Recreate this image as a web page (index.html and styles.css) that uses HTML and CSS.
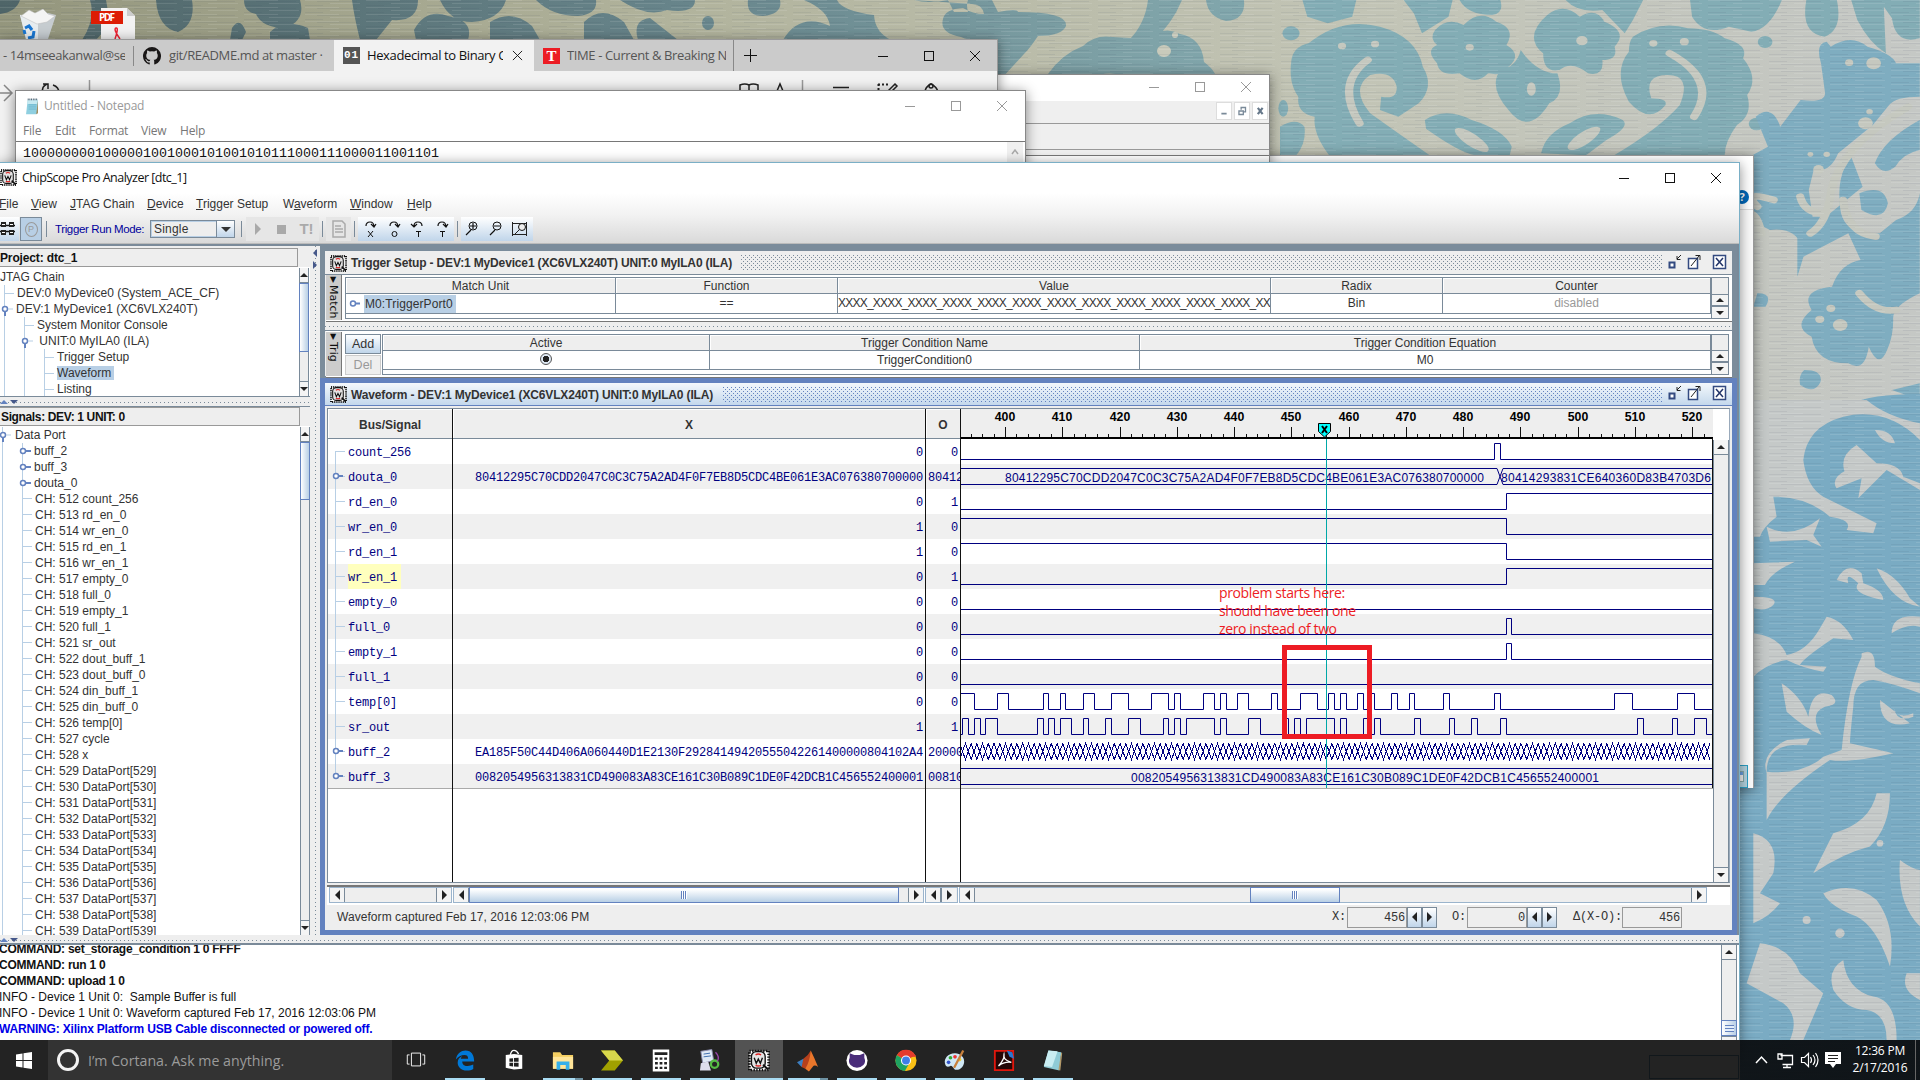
FILE: index.html
```html
<!DOCTYPE html>
<html lang="en">
<head>
<meta charset="utf-8">
<title>ChipScope Pro Analyzer [dtc_1]</title>
<link rel="stylesheet" href="styles.css">
</head>
<body>
<svg width="0" height="0" class="defs">
  <defs>
    <symbol id="chip" viewBox="0 0 16 16">
      <rect x="1" y="1" width="14" height="14" fill="#fff" stroke="#111" stroke-width="2" stroke-dasharray="1 1"/>
      <rect x="2.5" y="1.500" width="10" height="12" rx="3.500" fill="#e4e4e4" stroke="#111"/>
      <path d="M5.500 4q2-1.500 4 0M5.500 11.500q2 1 4 0" stroke="#d22" fill="none" stroke-width="1"/>
      <path d="M4.500 6l1.500 4 1.500-3 1.500 3 1.500-4" stroke="#111" fill="none" stroke-width="1"/>
      <path d="M11 11l3.500 3.500" stroke="#111" stroke-width="1.500"/>
    </symbol>
    <symbol id="win-min" viewBox="0 0 12 12"><path d="M1 6.500h10" stroke="currentColor" fill="none"/></symbol>
    <symbol id="win-max" viewBox="0 0 12 12"><rect x="1.500" y="1.500" width="9" height="9" stroke="currentColor" fill="none"/></symbol>
    <symbol id="win-x" viewBox="0 0 12 12"><path d="M1 1l10 10M11 1L1 11" stroke="currentColor" fill="none"/></symbol>
    <symbol id="pad" viewBox="0 0 16 20">
      <path d="M3 2h12v15l-2 2H1z" fill="#8fcfe0"/><path d="M3 2h12l-1 5H2.500z" fill="#c5e9f1"/><path d="M15 3v15l-2 1z" fill="#a48a5a"/>
      <path d="M3 1.500h12" stroke="#456" stroke-width="2" stroke-dasharray="1 1"/><path d="M4 8h9M4 10.500h9M4 13h9" stroke="#5aa9c4" stroke-width=".700"/>
    </symbol>
    <symbol id="in-max" viewBox="0 0 62 16">
      <path d="M3.500 8.500h5v5h-5z" fill="#fff" stroke="#334a80" stroke-width="2"/><path d="M15 1l-4 4M11 2v3.500h3.500" stroke="#222" fill="none"/>
      <path d="M22.500 4.500h9v10h-9z" fill="#fff" stroke="#334a80" stroke-width="1.500"/><path d="M25 12l8-10M29.500 1.500H34V6" stroke="#222" fill="none"/>
      <path d="M47.500 1.500h12v13h-12z" fill="#fff" stroke="#334a80" stroke-width="1.500"/><path d="M50 4l7 8M57 4l-7 8" stroke="#223468" stroke-width="1.500"/>
    </symbol>
  </defs>
</svg>

<main class="desktop">
  <svg class="wallpaper" viewBox="0 0 1920 1080">
    <defs>
      <linearGradient id="cloth" x1="0" x2="1"><stop offset="0" stop-color="#94967d"/><stop offset=".35" stop-color="#b1b39c"/><stop offset=".7" stop-color="#c2c4b5"/><stop offset="1" stop-color="#c5c8c5"/></linearGradient>
      <linearGradient id="dye" gradientUnits="userSpaceOnUse" x1="0" x2="1920" y1="0" y2="0"><stop offset="0" stop-color="#4f6568"/><stop offset=".35" stop-color="#67848a"/><stop offset=".6" stop-color="#7fa3a8"/><stop offset=".8" stop-color="#86b0b8"/><stop offset="1" stop-color="#77abc6"/></linearGradient>
      <pattern id="weave" width="61" height="7" patternUnits="userSpaceOnUse"><path d="M0 .5h34M25 3.500h30" stroke="#fff" stroke-opacity=".1"/><path d="M12 1.500h40M0 5.500h18" stroke="#345" stroke-opacity=".08"/></pattern>
    </defs>
    <rect width="1920" height="1080" fill="url(#cloth)"/>
    <g fill="url(#dye)">
      <path d="M0 0h20q-4 12-20 14zM90 0h16q6 26-10 40H82q14-22 8-40zM156 0h36q4 24-14 32-20-4-22-32zM232 28q8-12 14 4l-4 8h-12zM244 0h56q6 20-14 28-24 0-30-14-12-2-12-14zM270 32q14-14 38-4l2 12h-40zM352 0h66q0 22-26 20l-16 20h-16q-6-24-8-40zM414 30q12-22 34-14 26 4 20 24h-52zM440 0h66q-6 20-34 22-22 0-32-22zM490 22q22-14 42 4l8 14h-50zM536 0h60q2 14-18 16-26 0-42-16zM584 22q18-18 40 0l10 18h-50z"/>
      <path d="M620 0h75q0 14-28 10-20 8-47-10zM650 18l28 22h-40q-6-20 12-22zM748 0q-2 16 15 16 20-2 17-16zM804 0q24 10 26 26-30-14-47 14h108q-16-8-17-25-32-4-37-15zM702 23a6 7 0 1 1 12 0 6 7 0 0 1-12 0zM914 0q14 4 34 0l6 12h14q-2-8 0-12h24l6 12q20-4 20 0 50 0 48 14-4 10-28 10-8 12-14 18l-22 24h-8V40q-24 2-33-3-22-4-18-18 2-10 20-11 10 6 21 6-2-10-12-10z"/>
      <path d="M1148 0h34q-10 24-28 40h-25q16-16 19-40zM1206 0h38q2 20-18 21-18-4-20-21zM1048 74q14-20 35-28 12-12 30-9l35 2q16-14 32-5 22 4 24 28 16 12 10 20h-80q-18-12-34-7-24 12-52-1z"/>
    </g>
    <g fill="#c8cabb"><ellipse cx="1164" cy="51" rx="7" ry="6"/><circle cx="1175" cy="35" r="3"/></g>
    <g transform="translate(1280) scale(.408 .3333)">
      <g fill="#83adb5">
      <path d="M55 0h132l-10 50-60 20-50-20zM303 0h120l-10 50-65 50-20-60zM440 0h100q10 40-20 45-60 0-80-45zM700 0h190l-25 60-20 40-55-70q-60 10-90-30zM1005 0h225q-30 90-75 95l-55-15q-60 30-90-30zM1290 0h75q15 90-30 110-60-10-45-110zM1400 0h168v115q-60 20-68-60l-20-35 5 140q-40-30-70-100z"/>
      <circle cx="27" cy="100" r="21"/><ellipse cx="8" cy="325" rx="12" ry="25"/><circle cx="1189" cy="126" r="18"/><circle cx="1168" cy="372" r="19"/>
      <path d="M70 130Q150 50 245 80q90 30 105 120 30 60-10 110l-50 40-45-20 3-40q40 10 38-30-10-50-65-35-50 40 0 115 80 70 145 125H120Q80 400 85 350 40 340 45 290 20 250 28 180q5-40 42-50z"/>
      <path d="M380 90q30-40 70-15 40-50 80-10 50 20 25 70 40 30 5 65-10 30-50 20-30 40-70 0-50 10-55-30-30-40 0-55-20-20-5-45z"/>
      <path d="M655 45q40-40 80 5 40-30 60 15 60 30 25 75 10 40-30 40 5 50-35 40-40-40-70-10-40 10-40-50-50-50 10-115z"/>
      <path d="M590 150q40 70 90 70 20 70-20 90-50 100-100 20-50-70-20-120 40-10 50-60z"/>
      <path d="M865 110Q930 60 1000 85q60 0 90 30 60 20 45 60 40 60 10 110 15 60-25 90-30 50-30 90H820q110-80 160-150 30-90-30-90-60 0-40 70 40 0 35 20-40 60-90-10-40-90 0-150 0-30 10-45z"/>
      <path d="M355 360q50-40 115 0 80 30 98 80l-5 26h-85q-40-10-120-80zM640 460q10-60 70-90 60-50 130-10 20 20-40 60l-50 46zM0 380q40-30 60 0 5 50-20 86H0z"/>
      </g>
      <g fill="#7fadc0">
      <path d="M1350 140q50-40 90 0 60 20 70 50l58 0v100q-60 0-75 25l-40 60-85 85q-20 60-60 50l-12 60 15 130-30 40q-20-60-80-50l-65-40V480l60-40-30-90q40-40 60 30l50-80q60 10 60-20l-10-90q-15-60 14-65z"/>
      <path d="M1568 360v90q-40 10-60 50-30 30-50-10 20-70 110-130zM1400 470q-40 60-25 170 15 70 95 60l40-40q50-20 58-80v300q-70 40-65 80 0 50-15 90-20 60-45-10-10 80-50 50-80 0-90-80-50-30 0-80-30-60 50-70 20-70 70-80l-30-80-110 70-15 60V650l70 0 90-90z"/>
      <path d="M1420 580q60-30 70 30-10 60-65 20zM1285 1110q45 0 40 35-15 40-50 10-5-30 10-45zM1170 880q40 0 20 40h-30zM1500 1170l68-20v50z"/>
      </g>
      <g fill="#c5c8bf"><circle cx="152" cy="138" r="10"/><circle cx="233" cy="132" r="10"/><circle cx="465" cy="142" r="10"/><circle cx="740" cy="122" r="14"/><ellipse cx="616" cy="267" rx="11" ry="20"/><ellipse cx="470" cy="420" rx="52" ry="18" transform="rotate(40 470 420)"/><ellipse cx="745" cy="415" rx="50" ry="18" transform="rotate(-40 745 415)"/><circle cx="915" cy="130" r="10"/><circle cx="991" cy="125" r="11"/><circle cx="1455" cy="190" r="18"/><circle cx="1395" cy="188" r="10"/><circle cx="1435" cy="370" r="18"/><circle cx="1445" cy="335" r="8"/><circle cx="1320" cy="508" r="13"/><circle cx="1300" cy="463" r="7"/><circle cx="1340" cy="463" r="8"/><circle cx="1373" cy="975" r="18"/><circle cx="1350" cy="925" r="11"/><circle cx="1323" cy="958" r="11"/></g>
      <g fill="none" stroke="#c5c8bf" stroke-width="20" stroke-linecap="round"><path d="M195 370q-60-120 20-190M1015 350q60-110-60-190M1540 320Q1370 440 1350 580q-10 90-50 120M1380 600q10 100 80 110M1180 700q-10-60-30-60M1210 600q-80-30-40 20M1420 880q40 60 90 50M1275 590q10 50 60 50"/></g>
    </g>
    <path d="M1740 400q60 20 110 4 20-10 70-10v686h-180z" fill="#7aabc3"/>
    <g transform="translate(1400 400) scale(.3333)" fill="#c5c9c8">
      <path d="M1060 0h340q60 50 160 70v50q-100-100-230-70-110 30-120 130 10 80 60 110l160 80-10 30-80-10q20-30-50-40-70-60-170-60l10 60q-40 30-50 60h-20z"/>
      <path d="M1100 380q80 40 160-25l-20 50 25 35-45-20-110 5zM1060 490l125-5q-70 30-90 70h-35zM1060 590q80 0 60 25-20 20-60 10zM1310 540q30-60 75-20l5 30q60 20 60 50-100-20-75-50-40-40-30 0zM1430 505q60 20 100 90l30 25q-80-10-130-115zM1280 650q50 10 80 70l-60-5q-90 60-100 80l80 5-10 15q-60-10-110-35-60 10-100 50V700q80 10 100 65 60-10 100-80z"/>
      <path d="M1385 760q40-20 40 40 40 30 135 50v30q-80-30-140-40-60 0-60 80-10 90-10 110 130 30 130 30-130 30-190 20-150 100-190 180V1120q-20-60 60-100l70-5-10 20q-120-10-120 80 110 10 170-45l55-20q20-200 60-280zM1145 850q60 40 80 100 10-90 70-65 30 30-20 35-50 20-10 85-50-20-105-70z"/>
      <path d="M1340 230q-30-60 30-95l60 55q70 0 80 40l50 20v20l-100-60-85 85 10-60-75 30q-20-30 30-55zM1425 90q50 0 60 40-40 0-60-40zM1475 700q0-60 85-50v30q-40-10-85 20zM1440 900q0 90 90 70M1480 920q10 40 60 20v10q-50 20-60-30z"/>
      <path d="M1430 1180q-20 90-130 120l-60 120q90-60 170-80 60-60 60-160zM1060 1300q80 20 60 120l-40 60 60 30q-30 40-80 60zM1270 1480q90-40 160 20 60 80 40 200-40-120-100-150-80-30-100-70zM1500 1380q40 30 60 30v170q-70-70-60-200zM1080 1630q90 10 120 90l70 60-60 140h-40q30-70-20-110l-110-60zM1330 1680q-50 30-30 90 40 60 100 60 60 10 60 90h30q0-120-70-130-80-20-90-110zM1520 1720q-20 50 40 80v-80z"/>
      <circle cx="1320" cy="1600" r="14"/><circle cx="1220" cy="1560" r="12"/><circle cx="1440" cy="1330" r="10"/>
    </g>
    <rect width="1920" height="1080" fill="url(#weave)"/>
  </svg>

  <svg class="shortcut bin" viewBox="0 0 38 30"><path d="M1 6l6 24h22l8-24-8-2-10 5z" fill="#c6ccd0"/><path d="M1 6l6 24h12V9z" fill="#e7ecef"/><path d="M2 7l8-6 6 3 8-4 5 5 7 2-8 6-10 2z" fill="#f4f4f4" stroke="#bbb" stroke-width=".5"/><path d="M6 19l4-2 3 4M15 22l-1 6-5 1M6 25l-1-4" stroke="#1976d2" stroke-width="3" fill="none"/></svg>
  <svg class="shortcut pdf" viewBox="0 0 44 31"><path d="M10 0h26l8 8v23H10z" fill="#f2f2f2"/><path d="M36 0l8 8h-8z" fill="#ccc"/><rect y="3" width="32" height="13" fill="#dd1c04"/><text x="16" y="13" font-size="10" font-weight="700" fill="#fff" text-anchor="middle" font-family="Open Sans, sans-serif" textLength="16">PDF</text><path d="M24 31q4-12 1-11t4 11" stroke="#e23" fill="none" stroke-width="1.500"/></svg>

  <section class="window explorer">
    <div class="ex-top"><span class="help">?</span></div>
    <div class="ex-body"><span class="ex-view"><i></i></span></div>
  </section>

  <section class="window other">
    <div class="caption"><svg><use href="#win-min"/></svg><svg><use href="#win-max"/></svg><svg><use href="#win-x"/></svg></div>
    <div class="mdi">
      <svg viewBox="0 0 16 17"><path d="M5 11.500h6" stroke="#7a8a99" stroke-width="2"/></svg>
      <svg viewBox="0 0 16 17"><path d="M7 7V4.500h5v5H10M4.500 8.500h5v4h-5z" stroke="#7a8a99" stroke-width="1.500" fill="none"/></svg>
      <svg viewBox="0 0 16 17"><path d="M5.500 5l5.500 7M11 5l-5.500 7" stroke="#66788a" stroke-width="2.500"/></svg>
    </div>
    <div class="strip"></div><div class="strip2"></div>
  </section>

  <section class="window edge">
    <div class="tabs">
      <div class="tab t1"><span>- 14mseeakanwal@se</span></div>
      <div class="tab t2">
        <svg width="18" height="18" viewBox="0 0 16 16"><path fill="#191717" d="M8 0a8 8 0 0 0-2.530 15.590c.4.070.55-.17.55-.38v-1.490C3.780 14.210 3.310 12.650 3.310 12.650 2.950 11.730 2.420 11.480 2.420 11.480c-.72-.5.060-.49.060-.49.800.060 1.230.820 1.230.820.710 1.220 1.870.870 2.330.660.070-.510.280-.870.500-1.070C4.770 11.200 2.890 10.510 2.890 7.450c0-.87.310-1.590.820-2.150-.08-.2-.36-1.010.080-2.120 0 0 .670-.210 2.200.820a7.700 7.700 0 0 1 4 0c1.530-1.030 2.200-.82 2.200-.82.440 1.110.160 1.920.080 2.120.510.560.820 1.280.820 2.150 0 3.070-1.870 3.750-3.650 3.950.290.250.540.730.540 1.480v2.330c0 .210.150.460.550.380A8 8 0 0 0 8 0z"/></svg>
        <span>git/README.md at master ·</span></div>
      <div class="tab active"><b class="fav01">01</b><span>Hexadecimal to Binary C</span><svg class="tx"><use href="#win-x"/></svg></div>
      <div class="tab t4"><b class="favt">T</b><span>TIME - Current &amp; Breaking N</span></div>
      <svg class="plus" viewBox="0 0 13 13"><path d="M0 6.500h13M6.500 0v13" stroke="#111"/></svg>
      <div class="caption"><svg><use href="#win-min"/></svg><svg><use href="#win-max"/></svg><svg><use href="#win-x"/></svg></div>
    </div>
    <div class="edgebar">
      <svg width="998" height="60" viewBox="0 71 998 60" fill="none" stroke="#222" stroke-width="1.500">
        <path d="M0 93h13M5 85l8 8-8 8" stroke="#888"/><path d="M44 92q-2-5 4-8M44 84h5v5M54 85q6 2 6 8"/><path d="M90.500 80v30" stroke="#999"/>
        <path d="M741 91v-6q5-2 9 0 4-2 9 0v6M750 85v6M778 91l3-7 3 7M771 91h20"/><path d="M803.500 80v20" stroke="#999"/><path d="M834 87.500h16M888 92l8-8 2 2-6 6M926 92q0-5 6-8 6 3 7 8"/><path d="M879 84.500h10M879.500 84v8" stroke-width="2" stroke-dasharray="2 2"/><circle cx="932" cy="86" r="2"/>
      </svg>
    </div>
  </section>

  <section class="window notepad">
    <div class="np-title"><svg width="16" height="17"><use href="#pad"/></svg><span>Untitled - Notepad</span>
      <div class="caption"><svg><use href="#win-min"/></svg><svg><use href="#win-max"/></svg><svg><use href="#win-x"/></svg></div></div>
    <nav class="np-menu"><span>File</span><span>Edit</span><span>Format</span><span>View</span><span>Help</span></nav>
    <div class="np-text"><span>1000000001000001001000101001010111000111000011001101</span><i><svg viewBox="0 0 8 6"><path d="M1 5l3-4 3 4" stroke="#aaa" stroke-width="1.500" fill="none"/></svg></i></div>
  </section>

  <section class="window chipscope">
    <header class="cs-head">
      <div class="cs-title"><svg width="17" height="17"><use href="#chip"/></svg><span>ChipScope Pro Analyzer [dtc_1]</span>
        <div class="caption"><svg><use href="#win-min"/></svg><svg><use href="#win-max"/></svg><svg><use href="#win-x"/></svg></div></div>
      <nav class="cs-menu"><span><u>F</u>ile</span><span><u>V</u>iew</span><span><u>J</u>TAG Chain</span><span><u>D</u>evice</span><span><u>T</u>rigger Setup</span><span>W<u>a</u>veform</span><span><u>W</u>indow</span><span><u>H</u>elp</span></nav>
      <div class="toolbar">
        <svg class="blue" width="19" height="24" viewBox="0 0 19 24"><path d="M0 8.500h15M0 14.500h15" stroke="#111" stroke-width="1.500"/><path d="M1 5h5v5H1zM9 5h5v5H9zM1 13h5v5H1zM9 13h5v5H9z" fill="#222"/><path d="M2 7.500h3M10 7.500h3M2 15.500h3M10 15.500h3" stroke="#fff"/></svg>
        <span class="pbtn"><i>P</i></span><b class="sep"></b>
        <label>Trigger Run Mode:</label>
        <span class="combo"><span>Single</span><i></i></span><b class="sep s2"></b>
        <svg class="off" width="26" height="24" viewBox="0 0 26 24"><path d="M9 6l6 6-6 6z" fill="#a9a9a9"/></svg>
        <svg class="off" width="22" height="24" viewBox="0 0 22 24"><path d="M5 8h9v9H5z" fill="#a9a9a9"/></svg>
        <span class="off ti">T!</span><b class="sep s3"></b>
        <svg class="off" width="25" height="24" viewBox="0 0 25 24"><path d="M7 4h9l3 3v13H7zM9 9h6M9 12h8M9 15h8" stroke="#aaa" fill="none" stroke-width="1.500"/></svg><b class="sep s4"></b>
        <div class="blue group" id="search-tools"></div><b class="sep s5"></b>
        <div class="blue group">
          <svg width="24" height="24" viewBox="0 0 24 24"><path d="M10 13l-5 5M9 9h6M12 6v6" stroke="#111" stroke-width="1.200"/><circle cx="12" cy="9" r="4" fill="none" stroke="#111"/></svg>
          <svg width="24" height="24" viewBox="0 0 24 24"><path d="M10 13l-5 5M9 9h6" stroke="#111" stroke-width="1.200"/><circle cx="12" cy="9" r="4" fill="none" stroke="#111"/></svg>
          <svg width="24" height="24" viewBox="0 0 24 24"><path d="M3.500 19V5M3 6.500h14M17.500 5v14M3 17.500h14M11 12l-6 6" stroke="#222" fill="none"/><circle cx="13" cy="10" r="3.500" fill="#eee" stroke="#111"/></svg>
        </div>
      </div>
    </header>

    <div class="cs-main">
      <aside class="side">
        <h2>Project: dtc_1</h2>
        <div class="treebox project">
          <div class="tree" id="project-tree"></div>
          <div class="vscroll"><i class="up"></i><i class="thumb" style="height:69px"></i><i class="track"></i><i class="down"></i></div>
        </div>
        <div class="hsplit"><i class="tri-u"></i><i class="tri-d"></i></div>
        <h2 class="sig-head">Signals: DEV: 1 UNIT: 0</h2>
        <div class="treebox signals">
          <div class="tree" id="signal-tree"></div>
          <div class="vscroll"><i class="up"></i><i class="thumb" style="height:58px"></i><i class="track"></i><i class="down"></i></div>
        </div>
      </aside>
      <div class="vsplit"><i></i><i></i></div>
      <div class="mdi-area">
        <section class="iframe gray">
          <header><svg width="17" height="17"><use href="#chip"/></svg><h3>Trigger Setup - DEV:1 MyDevice1 (XC6VLX240T) UNIT:0 MyILA0 (ILA)</h3><span class="dots"></span><svg class="ibtn" width="62" height="16"><use href="#in-max"/></svg></header>
          <div class="trow match">
            <span class="vtab"><em>▼</em>Match</span>
            <div class="grid g1">
              <b>Match Unit</b><b>Function</b><b>Value</b><b>Radix</b><b>Counter</b>
              <span class="port"><svg width="12" height="9" viewBox="0 0 12 9"><circle cx="4" cy="4.500" r="2.500" fill="none" stroke="#6382bf" stroke-width="1.500"/><path d="M6 4.500h5" stroke="#6382bf" stroke-width="2"/></svg><mark>M0:TriggerPort0</mark></span><span>==</span><span class="val">XXXX_XXXX_XXXX_XXXX_XXXX_XXXX_XXXX_XXXX_XXXX_XXXX_XXXX_XXXX_XX</span><span>Bin</span><span class="dis">disabled</span>
            </div>
            <div class="vscroll mini"><i class="up"></i><i class="down"></i></div>
          </div>
          <div class="isplit"></div>
          <div class="trow trig">
            <span class="vtab"><em>▼</em>Trig</span>
            <div class="adddel"><button>Add</button><button disabled>Del</button></div>
            <div class="grid g2">
              <b>Active</b><b>Trigger Condition Name</b><b>Trigger Condition Equation</b>
              <span><i class="radio"></i></span><span>TriggerCondition0</span><span>M0</span>
            </div>
            <div class="vscroll mini"><i class="up"></i><i class="down"></i></div>
          </div>
        </section>
        <section class="iframe bluef">
          <header><svg width="17" height="17"><use href="#chip"/></svg><h3>Waveform - DEV:1 MyDevice1 (XC6VLX240T) UNIT:0 MyILA0 (ILA)</h3><span class="dots"></span><svg class="ibtn" width="62" height="16"><use href="#in-max"/></svg></header>
          <div class="wave">
            <div class="col names"><b>Bus/Signal</b><div id="names"></div></div>
            <div class="col xs"><b>X</b><div id="xs"></div></div>
            <div class="col os"><b>O</b><div id="os"></div></div>
            <div class="col plot"><svg id="plot" width="752" height="380" viewBox="961 409 752 380"></svg></div>
            <div class="vscroll big"><i class="up"></i><i class="track"></i><i class="down"></i></div>
          </div>
          <div class="hbars">
            <div class="hscroll h1"><i class="left"></i><i class="track"></i><i class="right"></i></div>
            <div class="hscroll h2"><i class="left"></i><i class="thumb" style="width:430px"></i><i class="track"></i><i class="right"></i></div>
            <div class="hscroll h3"><i class="left"></i><i class="right"></i></div>
            <div class="hscroll h4"><i class="left"></i><i class="lead"></i><i class="thumb" style="width:90px"></i><i class="track"></i><i class="right"></i></div>
          </div>
          <footer class="status"><span class="msg">Waveform captured Feb 17, 2016 12:03:06 PM</span>
            <label>X:</label><output>456</output><i class="sp l"></i><i class="sp r"></i>
            <label class="lo">O:</label><output>0</output><i class="sp l"></i><i class="sp r"></i>
            <label class="ld">Δ(X-O):</label><output>456</output></footer>
        </section>
      </div>
    </div>
    <div class="hsplit low"><i class="tri-u"></i><i class="tri-d"></i></div>
    <div class="console">
      <pre><b>COMMAND: set_storage_condition 1 0 FFFF</b>
<b>COMMAND: run 1 0</b>
<b>COMMAND: upload 1 0</b>
<span>INFO - Device 1 Unit 0:  Sample Buffer is full</span>
<span>INFO - Device 1 Unit 0: Waveform captured Feb 17, 2016 12:03:06 PM</span>
<b class="warn">WARNING: Xilinx Platform USB Cable disconnected or powered off.</b></pre>
      <div class="vscroll con"><i class="up"></i><i class="track"></i><i class="thumb"></i><i class="down"></i></div>
    </div>
  </section>

  <div class="note">problem starts here:<br>should have been one<br>zero instead of two</div>
  <div class="redbox"></div>

  <footer class="taskbar">
    <svg class="start" width="48" height="40" viewBox="0 0 48 40"><path d="M16 14.500l6.500-1v6.500H16zM23.500 13.300l8.500-1.300v8h-8.500zM16 21h6.500v6.500l-6.500-1zM23.500 21H32v8l-8.500-1.300z" fill="#fff"/></svg>
    <div class="cortana"><i></i><span>I’m Cortana. Ask me anything.</span></div>
    <div class="apps">
      <span><svg viewBox="0 0 24 24"><path d="M7 5h10v14H7zM5 7H2.500v10H5M19 7h2.500v10H19" stroke="#fff" fill="none"/></svg></span>
      <span class="run"><svg viewBox="0 0 24 24"><path fill="#0078d7" d="M2 11C3 4 8 1 12.500 1 19 1 22 6 22 13H9c0 4 3 5 6 5 2 0 4-.5 6-1.600v4.800C19 22.500 17 23 14 23 8 23 4 19 4 14.500c0-4 2-6 5-7.500-1 1-1.500 2-1.600 3h8C15.400 7 14 6 11.500 6 8 6 4 8 2 11z"/></svg></span>
      <span><svg viewBox="0 0 24 24"><path d="M3 7l9-1 9 1v15l-9 1-9-2z" fill="#fff"/><path d="M8 7q1-5 4-5t5 4" stroke="#fff" fill="none" stroke-width="1.500"/><path d="M7 11l4-.5v4H7zM12 10.400l5-.4v4.500h-5zM7 15.500h4v4L7 19zM12 15.500h5V20l-5-.4z" fill="#222"/></svg></span>
      <span class="run two"><svg viewBox="0 0 24 24"><path d="M1 3h8l2 3h12v15H1z" fill="#f5cf62"/><path d="M1 8h22v13H1z" fill="#ffe599"/><path d="M5 13h14v9h-4v-5H9v5H5z" fill="#35b0ea"/></svg></span>
      <span class="run"><svg viewBox="0 0 24 24"><path d="M0 1h15l9 11-9 11H0l9-11z" fill="#a0a000"/><path d="M0 1h15l9 11H9z" fill="#d8d84c"/></svg></span>
      <span class="run"><svg viewBox="0 0 24 24"><path d="M3 0h18v24H3z" fill="#fff"/><path d="M5 3h14v3H5z" fill="#222"/><path d="M5.500 10h3M10.500 10h3M15.500 10h3M5.500 15h3M10.500 15h3M15.500 15h3M5.500 20h3M10.500 20h3M15.500 20h3" stroke="#222" stroke-width="2.500"/></svg></span>
      <span class="run"><svg viewBox="0 0 24 24"><path d="M2 2l12-2 2 12-12 3z" fill="#dfe8f6" stroke="#88a"/><path d="M5 5l7-1M5 8l8-1" stroke="#36a"/><path d="M2 15l8-2 3 10H1z" fill="#dde"/><circle cx="17" cy="16" r="4" fill="none" stroke="#5b4" stroke-width="2.500"/><path d="M18 3q5 5 2 10" stroke="#94a" fill="none" stroke-width="1.500"/></svg></span>
      <span class="run cur"><svg viewBox="0 0 16 16"><use href="#chip"/></svg></span>
      <span class="run two"><svg viewBox="0 0 24 24"><path d="M0 14l7-4 4 3-6 6z" fill="#3d7fc1"/><path d="M7 10q5-3 8-9 1 7 0 15l-6 5-4-2z" fill="#b6401c"/><path d="M15 1q4 8 8 18-4-3-6 0l-4 5-4-3q5-8 6-20z" fill="#e9762b"/></svg></span>
      <span class="run"><svg viewBox="0 0 24 24"><circle cx="12" cy="12" r="11.500" fill="#fff"/><path d="M4 9l0-5 5 2h6l5-2v5q2 5-1 8-3 3-7 3t-7-3q-3-3-1-8z" fill="#4a2d7a"/></svg></span>
      <span class="run"><svg viewBox="0 0 24 24"><circle cx="12" cy="12" r="11.500" fill="#fbc116"/><path d="M12 12L2 6.200A11.500 11.500 0 0 1 22 6.200z" fill="#e33b2e"/><path d="M12 12l-10-5.800A11.500 11.500 0 0 0 10.800 23.400l5-9z" fill="#1ea362"/><path d="M12 7h10.500" stroke="#e33b2e" stroke-width="2"/><circle cx="12" cy="12" r="5.500" fill="#fff"/><circle cx="12" cy="12" r="4.300" fill="#3f7ee8"/></svg></span>
      <span class="run"><svg viewBox="0 0 24 24"><path d="M12 4C4 4 0 10 1 15s4 4 6 3 3 3 5 4c6 1 10-4 10-9s-4-9-10-9z" fill="#cfe7f5"/><circle cx="7" cy="9" r="2" fill="#3a3"/><circle cx="12" cy="8" r="2" fill="#e33"/><circle cx="5" cy="14" r="2" fill="#35c"/><circle cx="17" cy="11" r="2" fill="#ec3"/><path d="M21 1L11 20" stroke="#c8813c" stroke-width="2.500"/></svg></span>
      <span class="run"><svg viewBox="0 0 24 24"><path d="M2 1.500h20v21H2z" fill="#240707" stroke="#e2170d" stroke-width="2"/><path d="M6 18q7-8 6-13-2 6 8 9-8-1-14 4z" stroke="#fff" fill="none" stroke-width="1.400"/><path d="M15 1l6 2 2 7-5-2z" fill="#2978d0"/></svg></span>
      <span class="run"><svg viewBox="0 0 24 24"><path d="M7 1l14 2-2 20L2 19z" fill="#8fcbd6"/><path d="M7 1l10 1-6 17-9-1z" fill="#c9edf2"/><path d="M21 3l1 1-2 19-2-1z" fill="#b49a6a"/></svg></span>
    </div>
    <div class="tray">
      <svg width="170" height="40" viewBox="1750 1040 170 40" fill="none" stroke="#fff"><path d="M1756 1063l5.500-6 5.500 6" stroke-width="1.500"/><path d="M1780.500 1055.500h12v9h-10M1778 1054h4v5h-4zM1787 1065v3M1783 1067.500h8" stroke-width="1.300"/><path d="M1801.500 1057.500h3l4-4v13l-4-4h-3zM1810.500 1057q2 3 0 6M1813 1055q4 5 0 10M1815.500 1053q5 7 0 14" stroke-width="1.200"/><path d="M1825 1052h16v12h-5l-3 4-3-4h-5z" fill="#fff" stroke="none"/><path d="M1828 1055.500h10M1828 1058.500h10M1828 1061.500h7" stroke="#222"/><path d="M1915.500 1040v40" stroke="#666"/></svg>
      <div class="clock">12:36 PM<br>2/17/2016</div>
    </div>
    <div class="ghost"></div>
  </footer>
</main>
<script src="app.js"></script>
</body>
</html>
```
FILE: styles.css
```css
*{box-sizing:border-box}
body{margin:0;width:1920px;height:1080px;overflow:hidden;font:12px/16px "Liberation Sans",Arial,sans-serif;color:#333}
i{font-style:normal}
h2,h3{margin:0;font-size:12px;font-weight:700}
.defs{position:absolute}
.desktop{position:relative;width:1920px;height:1080px;overflow:hidden}
.wallpaper{position:absolute;inset:0}
.shortcut{position:absolute}
.bin{left:19px;top:9px;width:38px;height:30px}
.pdf{left:91px;top:8px;width:44px;height:31px}
.window{position:absolute;background:#fff;overflow:hidden;box-shadow:0 2px 12px rgba(0,0,0,.45)}
.caption{display:flex;margin-left:auto;color:#111}
.caption svg{width:12px;height:12px;margin-right:34px}
.caption svg:last-child{margin-right:0}

.explorer{left:1100px;top:155px;width:654px;height:633px;border:1px solid #999;border-left:0;border-bottom:0}
.ex-top{height:54px;border-bottom:1px solid #ddd;display:flex;justify-content:flex-end;align-items:flex-end;padding:0 4px 5px}
.help{width:14px;height:14px;border-radius:50%;background:#0067b8;color:#fff;font:700 11px/14px "Open Sans",sans-serif;text-align:center}
.ex-body{height:578px;display:flex;justify-content:flex-end;align-items:flex-end;background:#fafafa;padding-right:5px}
.ex-view{width:20px;height:23px;border:1px solid #2b9fc4;background:#b4d4e0;display:flex;justify-content:flex-end;padding:5px 3px}
.ex-view i{width:9px;border:1px solid #8aa;background:linear-gradient(#6a9fe0 35%,#f4f4f4 35%)}

.other{left:900px;top:74px;width:370px;height:100px;border:1px solid #888}
.other .caption{height:26px;justify-content:flex-end;padding:6px 17px 0;color:#999}
.other .mdi{height:23px;background:#efefef;display:flex;justify-content:flex-end;padding:1px 1px;gap:2px;border-bottom:1px solid #999}
.mdi svg{width:16px;height:18px;background:#fff;border:1px solid #ddd}
.strip{height:26px;background:#efefef;border-bottom:1px solid #999}
.strip2{height:6px;background:#efefef;border-bottom:1px solid #777}

.edge{left:-2px;top:39px;width:1000px;height:124px;border:1px solid #999;background:#f2f2f2;font:14px/20px "Open Sans",sans-serif;color:#555}
.tabs{height:31px;background:#cbcbcb;display:flex;align-items:center}
.tab{height:31px;display:flex;align-items:center;overflow:hidden;white-space:nowrap}
.tab span{overflow:hidden;font-size:13px;letter-spacing:-.38px;padding-bottom:1px}
.t1{width:134px;padding:0 8px 0 4px}
.t1 span{width:124px}
.t2{width:201px;padding-left:9px;gap:8px;border-left:1px solid #888;height:20px}
.t2 span{width:160px}
.tab.active{width:200px;background:#f2f2f2;color:#111;padding-left:9px;gap:7px}
.tab.active span{width:136px}
.tx{width:11px;height:11px;margin-left:2px;overflow:visible}
.fav01{width:17px;height:17px;background:#555;color:#fff;font:700 11px/17px "Liberation Mono",monospace;text-align:center;letter-spacing:1px}
.favt{width:17px;height:16px;background:#ec1c24;color:#fff;font:700 15px/16px "Liberation Serif",serif;text-align:center}
.t4{width:200px;padding-left:9px;gap:7px;border-right:1px solid #888}
.t4 span{width:159px}
.plus{width:13px;height:13px;margin-left:10px}
.tabs .caption{margin-right:16px}
.edgebar{height:90px}

.notepad{left:15px;top:90px;width:1011px;height:80px;border:1px solid #888;font:12px/16px "Open Sans",sans-serif;color:#777}
.np-title{height:30px;display:flex;align-items:center;padding:0 17px 0 8px;gap:4px;color:#999}
.np-title .caption{color:#999}
.np-title span{letter-spacing:-.18px}
.np-menu{height:21px;display:grid;grid-template-columns:32px 34px 52px 39px 40px;padding:2px 0 0 7px;border-bottom:1px solid #777}
.np-menu span{letter-spacing:-.2px}
.np-text{height:28px;display:flex;justify-content:space-between;padding:4px 0 0 7px;color:#111;font:13.330px/16px "Liberation Mono",monospace}
.np-text i{width:16px;height:26px;background:#f0f0f0;margin:-4px 2px 0 0;display:flex;justify-content:center;padding-top:7px}
.np-text svg{width:8px;height:6px}

.chipscope{left:-1px;top:162px;width:1741px;height:895px;border:1px solid #7aafc6;background:#eee}
.cs-head{height:81px;background:linear-gradient(#fff 30px,#f2f2f2 52px,#d9d9d9);border-bottom:1px solid #bbb}
.cs-title{height:29px;display:flex;align-items:center;gap:5px;padding-right:17px;font:12.500px/16px "Open Sans",sans-serif;color:#111}
.cs-title span{letter-spacing:-.52px}
.cs-menu{height:23px;display:grid;grid-template-columns:32px 39px 77px 49px 87px 67px 57px 40px;align-items:center;margin-left:-1px;white-space:nowrap}
.toolbar{height:28px;display:flex;align-items:center}
.toolbar>*{flex:none}
.blue{background:linear-gradient(#fff,#c0d5ea)}
.pbtn{width:22px;height:24px;margin-left:1px;background:#b8cfe5;border:1px solid #7a8a99;display:flex;align-items:center;justify-content:center}
.pbtn i{width:13px;height:15px;border:1px solid #999;border-radius:50%;font-size:9px;line-height:13px;text-align:center;color:#999}
.sep{width:1px;height:16px;background:#7a8a99;margin-left:4px}
.toolbar label{margin-left:8px;width:95px;color:#00009c;white-space:nowrap;font-size:11.5px;letter-spacing:-.37px}
.combo{width:85px;height:18px;border:1px solid #7a8a99;display:flex;background:#eee;box-shadow:inset 0 0 0 1px #b8cfe5}
.combo span{width:66px;padding-left:3px;line-height:16px;border-right:1px solid #7a8a99;letter-spacing:.2px}
.combo i{flex:1;background:linear-gradient(#fff,#c0d5ea)}
.combo i::after{content:"";display:block;border:5px solid transparent;border-top-color:#333;border-bottom:0;width:0;margin:6px auto 0}
.s2{margin-left:6px}
.off{background:#e6e6e6}
.s2+svg{margin-left:4px}
.ti{width:25px;height:24px;font:700 15px/24px "Liberation Sans",sans-serif;color:#aaa;text-align:center}
.s3{margin-left:3px}.s3+svg{margin-left:3px}.s4{margin-left:3px}.s5{margin-left:3px}
.group{display:flex;height:24px;margin-left:3px}

.cs-main{height:691px;display:flex}
.side{width:310px;flex:none;background:#eee;border-top:2px solid #7a8a99;display:flex;flex-direction:column;padding-top:2px}
.side h2{height:19px;width:298px;border:1px solid #999;border-left:0;line-height:19px;color:#111;white-space:nowrap;letter-spacing:-.14px}
.side h2.sig-head{width:300px;padding-left:1px;letter-spacing:-.36px}
.treebox{display:flex;background:#fff;overflow:hidden}
.project{height:130px;border-bottom:1px solid #7a8a99;padding:1px 1px 0 0}
.project .tree{padding-top:1px}
.signals{height:510px;border-top:1px solid #fff}
.tree{flex:1;overflow:hidden;white-space:nowrap}
.row{height:16px;display:flex;align-items:center}
.row mark{background:#b8cfe5;color:inherit;padding-right:3px}
.kids{border-left:1px solid #b8cfe5}
.tick{width:9px;height:1px;background:#b8cfe5;flex:none}
.knob{width:12px;height:12px;margin-left:-4px;flex:none;overflow:visible}
.project .kids{margin-left:4px}
.project .kids .kids{margin-left:19px}
.project .tick,.project .knob{margin-right:3px}
.signals .root{margin-left:2px;border-left:1px solid #b8cfe5;height:530px}
.signals .kids{margin-left:19px}
.signals .tick,.signals .knob{margin-right:4px}
.signals .kids .row{padding-left:0}
.signals .kids .tick,.signals .kids .knob{margin-right:3px}

.vscroll{width:10px;flex:none;display:flex;flex-direction:column;background:#eee;border-left:1px solid #7a8a99;border-right:1px solid #7a8a99}
.vscroll .up,.vscroll .down{height:15px;display:flex;align-items:center;justify-content:center;background:#f4f4f4;border:0 solid #7a8a99}
.vscroll .up{border-bottom-width:1px}.vscroll .down{border-top-width:1px}
.vscroll .up::after{content:"";border:4px solid transparent;border-bottom:4px solid #222;border-top:0}
.vscroll .down::after{content:"";border:4px solid transparent;border-top:4px solid #222;border-bottom:0}
.track{flex:1}
.vscroll .thumb{background:linear-gradient(90deg,#fff,#b8cfe5);border:1px solid #6382bf;margin:0 -1px}
.hsplit{height:10px;background:#eee radial-gradient(circle at .5px .5px,#7a8a99 .6px,transparent .7px) 0 5px/4px 8px repeat-x;border-bottom:1px solid #7a8a99;display:flex;gap:2px;padding-top:3px}
.tri-u,.tri-d{border:4px solid transparent;height:0}
.tri-u{border-bottom-color:#6382bf;border-top:0}
.tri-d{border-top-color:#46588a;border-bottom:0}
.hsplit.low{border-bottom:2px solid #7a8a99}
.vsplit{width:10px;flex:none;background:#eee radial-gradient(circle at .5px .5px,#7a8a99 .6px,transparent .7px) 5px 0/8px 4px repeat-y;border-top:2px solid #7a8a99;padding:3px 0 0 3px}
.vsplit i{display:block;border:4px solid transparent;border-right:4px solid #46588a;border-left:0;height:8px;width:4px;margin-bottom:4px}
.vsplit i+i{border-right:0;border-left:4px solid #46588a}

.mdi-area{flex:1;min-width:0;background:#7a8a99;display:flex;flex-direction:column;padding-right:2px}
.iframe{background:#eee;border:5px solid #7b8c9b}
.gray{height:134px;border-top-width:7px;border-bottom-width:2px}
.bluef{height:557px;border-color:#6382bf}
.iframe header{height:24px;display:flex;align-items:center;padding:1px 4px 0 5px;border-bottom:1px solid #7a8a99}
.bluef header{background:linear-gradient(#f4f8fc,#c4d8ec);border-color:#6382bf;height:23px}
.iframe h3{margin:0 8px 0 4px;white-space:nowrap;letter-spacing:-.15px}
.gray h3{width:382px}
.bluef h3{width:364px}
.dots{flex:1;height:16px;background:radial-gradient(circle at .5px .5px,#7a8a99 .6px,transparent .7px) 0 0/4px 4px,radial-gradient(circle at .5px .5px,#7a8a99 .6px,transparent .7px) 2px 2px/4px 4px}
.bluef .dots{background:radial-gradient(circle at .5px .5px,#6382bf .6px,transparent .7px) 0 0/4px 4px,radial-gradient(circle at .5px .5px,#6382bf .6px,transparent .7px) 2px 2px/4px 4px}
.ibtn{margin:-3px 0 0 4px}
.trow{display:flex;background:#fff;margin-left:1px;border:solid #777;border-width:0 0 1px}
.match{height:47px;padding:2px 2px 2px 0}
.trig{height:47px;padding:3px 2px 2px 0}
.vtab{width:16px;flex:none;background:#ccc;border-right:1px solid #777;writing-mode:vertical-rl;font:11px/15px "DejaVu Sans",sans-serif;color:#111;margin:-2px 0 -1px;white-space:nowrap}
.vtab em{display:inline-block;font:8px/10px "DejaVu Sans",sans-serif;writing-mode:horizontal-tb;height:10px}
.grid{display:grid;flex:none;border:1px solid #7a8a99;text-align:center;margin-left:3px}
.grid b{font-weight:400;background:#eee;border-right:1px solid #7a8a99;border-bottom:1px solid #7a8a99;box-shadow:inset 1px 1px #fff;line-height:16px;overflow:hidden;white-space:nowrap}
.grid>span{border-right:1px solid #7a8a99;border-bottom:1px solid #7a8a99;overflow:hidden;white-space:nowrap}
.g1{width:1367px;grid-template-columns:270px 222px 433px 172px 1fr;grid-template-rows:16px 20px}
.g1>span{line-height:18px}
.g1>.port{display:flex;align-items:center;padding-left:3px}
.port svg{margin-right:3px}
.port mark{background:#b8cfe5;color:inherit;line-height:18px;padding:0 3px 0 1px;letter-spacing:.1px}
.val{letter-spacing:-.780px;text-align:left}
.dis{color:#999}
.vscroll.mini{width:17px;justify-content:flex-end;border-top:1px solid #7a8a99;border-bottom:1px solid #7a8a99;border-left:0}
.mini .up,.mini .down{height:12px}
.vscroll.mini .up{border-top-width:1px}
.isplit{height:9px;border-bottom:1px solid #7a8a99;background:#eee radial-gradient(circle at .5px .5px,#7a8a99 .6px,transparent .7px) 0 4px/4px 8px repeat-x}
.adddel{width:36px;flex:none;margin-left:3px;display:flex;flex-direction:column;gap:1px}
.adddel button{font:12.500px "Liberation Sans",sans-serif;height:20px;padding:0;border:1px solid #7a8a99;background:linear-gradient(#fff,#c0d5ea);color:#333}
.adddel button:disabled{background:#eee;color:#999;border-color:#ccc}
.grid.g2{margin-left:1px;width:1330px;grid-template-columns:327px 430px 1fr;grid-template-rows:16px 19px}
.g2>span{line-height:18px}
.radio{display:inline-block;width:12px;height:12px;border-radius:50%;border:1px solid #555;background:radial-gradient(#222 3px,#dfe9f4 3.500px);vertical-align:top;margin-top:2px}

.wave{height:475px;margin:2px 2px 0 2px;display:flex;background:#fff;border:1px solid #7a8a99;border-right-color:#9ab}
.col{flex:none;border-right:1px solid #111;height:473px}
.col>b{display:block;height:30px;line-height:32px;background:#eee;border-bottom:1px solid #7a8a99;text-align:center;box-shadow:inset 1px 1px #fff}
.sig{height:25px;line-height:28px;font-family:"Liberation Mono",monospace;letter-spacing:-.2px;color:#000080;white-space:pre;overflow:hidden}
.sig:nth-child(even){background:#f0f0f0}
.sig:nth-child(14){border-bottom:1px solid #aaa}
.names{width:125px}.xs{width:473px;text-align:right}.os{width:35px;text-align:right}.plot{width:752px;border-right:0}
.names .sig{display:flex;align-items:flex-start;padding-left:7px}
.names .sig svg{width:14px;height:25px;margin-right:-1px;flex:none;overflow:visible}
.names mark{background:#ffffbe;color:inherit;padding-right:4px;height:25px}
.xs .sig,.os .sig{padding-right:2px}
.os .sig.long{text-align:left;padding-left:2px;padding-right:0}
.plot svg{display:block}
.vscroll.big{width:16px;margin-top:31px}
.hbars{height:20px;margin:2px 2px 0;display:flex;background:#fff;border-top:2px solid #777;padding-left:2px}
.hscroll{display:flex;height:16px;border:1px solid #9bb4cc;background:#eee}
.hscroll .left,.hscroll .right{width:15px;flex:none;display:flex;align-items:center;justify-content:center;background:#f4f4f4;border:0 solid #7a8a99}
.hscroll .left{border-right-width:1px}.hscroll .right{border-left-width:1px}
.hscroll .left::after,.sp.l::after{content:"";border:5px solid transparent;border-right:5px solid #222;border-left:0}
.hscroll .right::after,.sp.r::after{content:"";border:5px solid transparent;border-left:5px solid #222;border-right:0}
.hscroll .thumb{background:linear-gradient(#fff,#fff 10%,#b8cfe5);border:1px solid #6382bf;margin:-1px 0;display:flex;align-items:center;justify-content:center}
.hscroll .thumb::after{content:"";width:6px;height:8px;background:repeating-linear-gradient(90deg,#6382bf 0 1px,#fff 1px 2px)}
.h1{width:123px}.h2{width:471px;margin-left:1px}.h3{width:33px;margin-left:1px}.h4{width:748px;margin-left:1px}
.lead{flex:0 0 275px}
.status{display:flex;height:24px;align-items:center;padding-left:12px;font-family:"Liberation Mono",monospace}
.status .msg{font-family:"Liberation Sans",sans-serif;width:995px;white-space:nowrap;letter-spacing:.06px}
.status label{width:15px;white-space:nowrap;letter-spacing:-.2px}
.status label.lo{margin-left:15px}.status label.ld{margin-left:16px;width:49px}
.status output{width:60px;height:21px;border:1px solid #999;text-align:right;line-height:20px;padding-right:1px;letter-spacing:-.2px}
.sp{width:15px;height:21px;border:1px solid #7a8a99;background:linear-gradient(#fff,#c0d5ea);display:flex;align-items:center;justify-content:center}
.console{height:108px;display:flex;background:#fff;overflow:hidden}
.console pre{margin:-4px 0 0 -1px;flex:1;font:12px/16px "Liberation Sans",sans-serif;color:#111}
.console b{letter-spacing:-.27px}
.console .warn{color:#0000e8;letter-spacing:-.18px}
.vscroll.con{width:16px;margin-right:2px}
.con .thumb{height:16px;background:repeating-linear-gradient(#6382bf 0 1px,#e4eefa 1px 3px) 50% 50%/9px 7px no-repeat,linear-gradient(90deg,#fff,#b8cfe5)}
.con .down{margin-bottom:2px}

.note{position:absolute;left:1219px;top:584px;font:14px/18px "Open Sans",sans-serif;color:#ed1c24;white-space:nowrap;letter-spacing:-.380px}
.redbox{position:absolute;left:1282px;top:645px;width:90px;height:94px;border:5px solid #ed1c24}

.taskbar{position:absolute;left:0;top:1040px;width:1920px;height:40px;display:flex;background:linear-gradient(90deg,#232323 1740px,rgba(10,13,16,.95) 1740px);font-family:"Open Sans",sans-serif}
.cortana{width:344px;background:#333;display:flex;align-items:center;padding-left:9px;gap:9px;color:#9b9b9b;font-size:14.2px}
.cortana i{width:22px;height:22px;border:3px solid #f4f4f4;border-radius:50%}
.cortana span{white-space:nowrap;padding-top:1px}
.apps{display:flex;gap:1px}
.apps span{width:48px;height:40px;display:flex;align-items:center;justify-content:center;border-bottom:2px solid transparent}
.apps svg{width:22px;height:23px}
.apps .run{background:linear-gradient(#a9dcf3,#a9dcf3) 50% 38px/40px 2px no-repeat;border:0}
.apps .two{background-image:linear-gradient(90deg,#a9dcf3 80%,#6f93a4 80%)}
.apps .cur{background:linear-gradient(#a9dcf3,#a9dcf3) 0 38px/48px 2px no-repeat,#535353}
.tray{display:flex;margin-left:auto;width:170px;position:relative;color:#fff}
.clock{position:absolute;left:97px;top:2px;width:66px;text-align:center;font-size:12px;line-height:17px;letter-spacing:-.2px}
.ghost{position:absolute;left:1649px;top:15px;width:90px;height:24px;border:1px solid #11171b}
```
FILE: app.js
```js
(() => {
const KNOB_R = '<svg class="knob" viewBox="0 0 12 12"><circle cx="4" cy="6" r="2.5" fill="#fff" stroke="#6382bf" stroke-width="1.5"/><path d="M6 6h6" stroke="#6382bf" stroke-width="2"/></svg>';
const KNOB_D = '<svg class="knob" viewBox="0 0 12 12"><circle cx="4" cy="6" r="2.5" fill="#fff" stroke="#6382bf" stroke-width="1.5"/><path d="M4 8v5" stroke="#6382bf" stroke-width="2"/><path d="M7 6h5" stroke="#b8cfe5"/></svg>';
const TICK = '<i class="tick"></i>';
const row = (lead, text) => `<div class="row">${lead}<span>${text}</span></div>`;
const byId = id => document.getElementById(id);

byId('project-tree').innerHTML =
  row('', 'JTAG Chain') + '<div class="kids">' +
  row(TICK, 'DEV:0 MyDevice0 (System_ACE_CF)') + row(KNOB_D, 'DEV:1 MyDevice1 (XC6VLX240T)') +
  '<div class="kids">' + row(TICK, 'System Monitor Console') + row(KNOB_D, '&nbsp;UNIT:0 MyILA0 (ILA)') +
  '<div class="kids">' + row(TICK, 'Trigger Setup') + row(TICK, '<mark>Waveform</mark>') + row(TICK, 'Listing') +
  '</div></div></div>';

const channels = ['count_256', 'rd_en_0', 'wr_en_0', 'rd_en_1', 'wr_en_1', 'empty_0', 'full_0', 'empty_1', 'full_1', 'sr_out',
  'dout_buff_1', 'dout_buff_0', 'din_buff_1', 'din_buff_0', 'temp[0]', 'cycle', 'x'];
for (let n = 529; n < 540; n++) channels.push(`DataPort[${n}]`);
byId('signal-tree').innerHTML = '<div class="root">' + row(KNOB_D, 'Data Port') + '<div class="kids">' +
  ['buff_2', 'buff_3', 'douta_0'].map(t => row(KNOB_R, t)).join('') +
  channels.map((t, i) => row(TICK, `CH: ${512 + i} ${t}`)).join('') + '</div></div>';

const DOUTA = '80412295C70CDD2047C0C3C75A2AD4F0F7EB8D5CDC4BE061E3AC076380700000';
const BUFF2 = 'EA185F50C44D406A060440D1E2130F29284149420555042261400000804102A4';
const BUFF3 = '0082054956313831CD490083A83CE161C30B089C1DE0F42DCB1C456552400001';
const signals = [
  ['count_256', '0', '0'], ['douta_0', DOUTA, '80412'], ['rd_en_0', '0', '1'], ['wr_en_0', '1', '0'],
  ['rd_en_1', '1', '0'], ['wr_en_1', '0', '1'], ['empty_0', '0', '0'], ['full_0', '0', '0'],
  ['empty_1', '0', '0'], ['full_1', '0', '0'], ['temp[0]', '0', '0'], ['sr_out', '1', '1'],
  ['buff_2', BUFF2, '20000'], ['buff_3', BUFF3, '00810']];
byId('names').innerHTML = signals.map(([n], i) => {
  const from = i === 0 ? 12 : 0, to = i === 13 ? 12 : 25;
  const bus = n === 'douta_0' || n.startsWith('buff');
  return `<div class="sig"><svg viewBox="0 0 14 25"><path d="M.5 ${from}V${to}M.5 12.5H10" stroke="#b8cfe5" fill="none"/>` +
    (bus ? '<circle cx="1" cy="12" r="2.500" fill="#fff" stroke="#6382bf" stroke-width="1.5"/><path d="M3 12h5" stroke="#6382bf" stroke-width="2"/>' : '') +
    `</svg>${n === 'wr_en_1' ? '<mark>' + n + '</mark>' : n}</div>`;
}).join('');
byId('xs').innerHTML = signals.map(s => `<div class="sig">${s[1]}</div>`).join('');
byId('os').innerHTML = signals.map(s => `<div class="sig${s[2].length > 1 ? ' long' : ''}">${s[2]}</div>`).join('');

// Waveform plot: x is in window pixels, each sample is STEP wide.
const X0 = 961, X1 = 1712, STEP = 5.7275;
const at = n => Math.round(1005 + STEP * (n - 400)) + .5;
const left = list => list.map(v => Math.round(950 + v / 3 - .5) + .5);
const right = list => list.map(v => Math.round(1400 + v / 3 - .5) + .5);
const rowTop = r => 439 + 25 * r;
const level = (r, high) => rowTop(r) + (high ? 4.5 : 20.5);
function digital(r, high, edges) {
  let d = `M${X0} ${level(r, high)}`;
  for (const x of edges) { d += `H${x}`; high = !high; d += `V${level(r, high)}`; }
  return d + `H${X1}`;
}
let svg = '<rect x="960" y="409" width="753" height="30" fill="#eee"/>';
for (let r = 0; r < 14; r++) svg += `<rect x="961" y="${rowTop(r)}" width="752" height="25" fill="${r % 2 ? '#f0f0f0' : '#fff'}"/>`;
let ticks = '';
for (let n = 394; n <= 522; n += 2) ticks += `M${at(n)} ${n % 10 ? 434 : 427}V438`;
svg += `<path d="${ticks}" stroke="#111"/><path d="M960 438H1713" stroke="#000" stroke-width="2"/>`;
for (let n = 400; n <= 520; n += 10) svg += `<text x="${at(n) - .5}" y="421" text-anchor="middle" font-weight="700" font-size="12.3" fill="#000">${n}</text>`;
const edge = right([319]);
const pulse = right([319, 334]);
const temp = left([73,142,175,280,295,332,346,400,433,484,535,604,655,673,691,760,793,811,829,862,895,964,983,1051,1103,1135,1153,1171,1189,1222,1240,1258,1273,1324,1342,1378,1393]).concat(right([130,148,283,301,643,697,832,883]));
const sr = left([37,55,73,91,106,142,262,280,295,313,331,364,400,415,466,484,535,571,640,655,673,691,709,793,811,829,895,931,997,1015,1033,1051,1069,1153,1171,1189,1240,1258,1273,1291]).concat(right([-7,11,43,61,148,163,214,232,301,319,712,730,817,832,883,919]).slice(2));
let d = digital(0, false, right([283, 301])) + digital(2, false, edge) + digital(3, true, edge) + digital(4, true, edge) +
  digital(5, false, edge) + digital(6, false, []) + digital(7, false, pulse) + digital(8, false, pulse) + digital(9, false, []) +
  digital(10, true, temp) + digital(11, false, sr);
d += `M${X0} 468.5H1497L1503 484.5H${X1}M${X0} 484.5H1497L1503 468.5H${X1}M${X0} 768.5H${X1}M${X0} 784.5H${X1}`;
let a = '', b = '';
for (let n = 392; n <= 523; n++) {
  const x = 1005.5 + STEP * (n - 400);
  a += `${n === 392 ? 'M' : 'L'}${x} ${n % 2 ? 743.5 : 759.5}`;
  b += `${n === 392 ? 'M' : 'L'}${x} ${n % 2 ? 759.5 : 743.5}`;
}
const label = (x, y, w, t) => `<text x="${x}" y="${y}" textLength="${w}" font-size="12" fill="#000080">${t}</text>`;
svg += `<path d="${d}" stroke="#000080" fill="none"/><path d="${a}${b}" stroke="#000080" fill="none" shape-rendering="crispEdges"/>` +
  label(1005, 482, 479, DOUTA) + label(1501, 482, 210, '80414293831CE640360D83B4703D6') + label(1131, 782, 468, BUFF3) +
  '<path d="M960 788.5H1713" stroke="#aaa"/><path d="M1712.500 438V788" stroke="#111"/><path d="M1326.500 439V788" stroke="#00a8a8"/>' +
  '<path d="M1318.500 423.500h12v8l-6 5.500-6-5.500z" fill="#0ff" stroke="#000"/><path d="M1322 426l5 7M1327 426l-5 7" stroke="#000" stroke-width="2"/>';
byId('plot').innerHTML = svg;

// Cursor search buttons: a curved arrow above the marker it jumps to.
byId('search-tools').innerHTML = ['X', 'O', 'T', 'T'].map((c, i) =>
  `<svg width="24" height="24" viewBox="0 0 24 24"><path d="${i === 2 ? 'M16 9q0-4-4-4-4 0-4 4M5 7l3 3 3-3' : 'M8 9q0-4 4-4 4 0 4 5M13 7l3 3 2-3'}" stroke="#111" fill="none" stroke-width="1.2"/>` +
  (c === 'X' ? '<path d="M10 14l5 6M15 14l-5 6" stroke="#111"/>' : c === 'O' ? '<circle cx="12.5" cy="17" r="2.5" fill="none" stroke="#111"/>' : '<path d="M10 14.500h5M12.500 14.500V20" stroke="#111"/>') + '</svg>').join('');
})();
```
